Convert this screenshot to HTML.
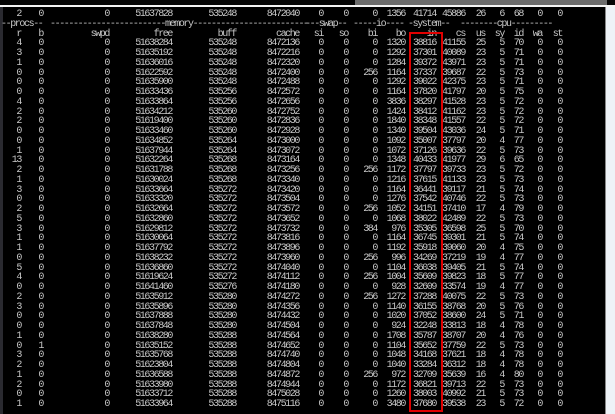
<!DOCTYPE html>
<html><head><meta charset="utf-8"><style>
*{margin:0;padding:0;box-sizing:border-box}
html,body{width:615px;height:414px;overflow:hidden;background:#eef2f7}
#top{position:absolute;left:0;top:0;width:615px;height:5px;background:#050505}
#topg{position:absolute;left:355px;top:0;width:252px;height:5px;background:#6c6c6c}
#wl{position:absolute;left:0;top:5px;width:615px;height:2px;background:#f4f4f4}
#term{position:absolute;left:0;top:7px;width:606px;height:407px;background:#000;border-left:3px solid #2a2a30;border-right:1px solid #888}
#lines{position:absolute;left:0;top:10px;font-family:"Liberation Mono",monospace;font-size:10px;letter-spacing:-1.4px;color:#c8c8c8;line-height:9.75px}
.r{display:grid;grid-template-columns:21px 22px 66px 63px 64px 63px 24px 25px 29px 28px 31px 29px 20px 19px 19px 19px 20px;height:9.75px;white-space:pre}
.r span{text-align:right;padding-right:0}
.h{position:relative;height:9.75px;white-space:pre}
.h span{position:absolute;top:0}
#box{position:absolute;left:409px;top:32px;width:34px;height:380px;border:2px solid #e00000}
</style></head><body>
<div id="top"></div><div id="topg"></div><div id="wl"></div>
<div id="term"></div>
<div id="lines">
<div class="r"><span>2</span><span>0</span><span>0</span><span>51637828</span><span>535248</span><span>8472040</span><span>0</span><span>0</span><span>0</span><span>1356</span><span>41714</span><span>45886</span><span>26</span><span>6</span><span>68</span><span>0</span><span>0</span></div>
<div class="h"><span style="left:1px">--procs--</span><span style="left:50px">-------------------------memory-------------------------</span><span style="left:305px">---swap--</span><span style="left:353px">-----io----</span><span style="left:408px">-system--</span><span style="left:460px">--------cpu---------</span></div>
<div class="r"><span>r</span><span>b</span><span>swpd</span><span>free</span><span>buff</span><span>cache</span><span>si</span><span>so</span><span>bi</span><span>bo</span><span>in</span><span>cs</span><span>us</span><span>sy</span><span>id</span><span>wa</span><span>st</span></div>
<div class="r"><span>4</span><span>0</span><span>0</span><span>51638284</span><span>535248</span><span>8472136</span><span>0</span><span>0</span><span>0</span><span>1320</span><span>38816</span><span>41155</span><span>25</span><span>5</span><span>70</span><span>0</span><span>0</span></div>
<div class="r"><span>3</span><span>0</span><span>0</span><span>51635192</span><span>535248</span><span>8472216</span><span>0</span><span>0</span><span>0</span><span>1292</span><span>37301</span><span>40089</span><span>23</span><span>5</span><span>71</span><span>0</span><span>0</span></div>
<div class="r"><span>1</span><span>0</span><span>0</span><span>51636016</span><span>535248</span><span>8472320</span><span>0</span><span>0</span><span>0</span><span>1284</span><span>39372</span><span>43971</span><span>23</span><span>5</span><span>71</span><span>0</span><span>0</span></div>
<div class="r"><span>0</span><span>0</span><span>0</span><span>51622592</span><span>535248</span><span>8472400</span><span>0</span><span>0</span><span>256</span><span>1164</span><span>37337</span><span>39687</span><span>22</span><span>5</span><span>73</span><span>0</span><span>0</span></div>
<div class="r"><span>0</span><span>0</span><span>0</span><span>51635900</span><span>535248</span><span>8472488</span><span>0</span><span>0</span><span>0</span><span>1292</span><span>39022</span><span>42375</span><span>23</span><span>5</span><span>71</span><span>0</span><span>0</span></div>
<div class="r"><span>0</span><span>0</span><span>0</span><span>51633436</span><span>535256</span><span>8472572</span><span>0</span><span>0</span><span>0</span><span>1164</span><span>37820</span><span>41797</span><span>20</span><span>5</span><span>75</span><span>0</span><span>0</span></div>
<div class="r"><span>4</span><span>0</span><span>0</span><span>51633864</span><span>535256</span><span>8472656</span><span>0</span><span>0</span><span>0</span><span>3836</span><span>38297</span><span>41528</span><span>23</span><span>5</span><span>72</span><span>0</span><span>0</span></div>
<div class="r"><span>2</span><span>0</span><span>0</span><span>51634212</span><span>535260</span><span>8472752</span><span>0</span><span>0</span><span>0</span><span>1424</span><span>38412</span><span>41162</span><span>23</span><span>5</span><span>72</span><span>0</span><span>0</span></div>
<div class="r"><span>2</span><span>0</span><span>0</span><span>51619400</span><span>535260</span><span>8472836</span><span>0</span><span>0</span><span>0</span><span>1840</span><span>38348</span><span>41557</span><span>22</span><span>5</span><span>72</span><span>0</span><span>0</span></div>
<div class="r"><span>0</span><span>0</span><span>0</span><span>51633460</span><span>535260</span><span>8472928</span><span>0</span><span>0</span><span>0</span><span>1340</span><span>39504</span><span>43036</span><span>24</span><span>5</span><span>71</span><span>0</span><span>0</span></div>
<div class="r"><span>0</span><span>0</span><span>0</span><span>51634852</span><span>535264</span><span>8473000</span><span>0</span><span>0</span><span>0</span><span>1092</span><span>35007</span><span>37797</span><span>20</span><span>4</span><span>77</span><span>0</span><span>0</span></div>
<div class="r"><span>1</span><span>0</span><span>0</span><span>51637944</span><span>535264</span><span>8473072</span><span>0</span><span>0</span><span>0</span><span>1072</span><span>37126</span><span>39636</span><span>22</span><span>5</span><span>73</span><span>0</span><span>0</span></div>
<div class="r"><span>13</span><span>0</span><span>0</span><span>51632264</span><span>535268</span><span>8473164</span><span>0</span><span>0</span><span>0</span><span>1348</span><span>40433</span><span>41977</span><span>29</span><span>6</span><span>65</span><span>0</span><span>0</span></div>
<div class="r"><span>2</span><span>0</span><span>0</span><span>51631788</span><span>535268</span><span>8473256</span><span>0</span><span>0</span><span>256</span><span>1172</span><span>37797</span><span>39733</span><span>23</span><span>5</span><span>72</span><span>0</span><span>0</span></div>
<div class="r"><span>1</span><span>0</span><span>0</span><span>51630024</span><span>535268</span><span>8473340</span><span>0</span><span>0</span><span>0</span><span>1216</span><span>37615</span><span>41133</span><span>23</span><span>5</span><span>73</span><span>0</span><span>0</span></div>
<div class="r"><span>3</span><span>0</span><span>0</span><span>51633664</span><span>535272</span><span>8473420</span><span>0</span><span>0</span><span>0</span><span>1164</span><span>36441</span><span>39117</span><span>21</span><span>5</span><span>74</span><span>0</span><span>0</span></div>
<div class="r"><span>0</span><span>0</span><span>0</span><span>51633320</span><span>535272</span><span>8473504</span><span>0</span><span>0</span><span>0</span><span>1276</span><span>37542</span><span>40746</span><span>22</span><span>5</span><span>73</span><span>0</span><span>0</span></div>
<div class="r"><span>2</span><span>0</span><span>0</span><span>51632664</span><span>535272</span><span>8473572</span><span>0</span><span>0</span><span>256</span><span>1052</span><span>34151</span><span>37410</span><span>17</span><span>4</span><span>79</span><span>0</span><span>0</span></div>
<div class="r"><span>5</span><span>0</span><span>0</span><span>51632860</span><span>535272</span><span>8473652</span><span>0</span><span>0</span><span>0</span><span>1068</span><span>38022</span><span>42489</span><span>22</span><span>5</span><span>73</span><span>0</span><span>0</span></div>
<div class="r"><span>3</span><span>0</span><span>0</span><span>51629812</span><span>535272</span><span>8473732</span><span>0</span><span>0</span><span>384</span><span>976</span><span>35305</span><span>36598</span><span>25</span><span>5</span><span>70</span><span>0</span><span>0</span></div>
<div class="r"><span>1</span><span>0</span><span>0</span><span>51630064</span><span>535272</span><span>8473816</span><span>0</span><span>0</span><span>0</span><span>1164</span><span>36745</span><span>39301</span><span>21</span><span>5</span><span>74</span><span>0</span><span>0</span></div>
<div class="r"><span>1</span><span>0</span><span>0</span><span>51637792</span><span>535272</span><span>8473896</span><span>0</span><span>0</span><span>0</span><span>1192</span><span>35918</span><span>39060</span><span>20</span><span>4</span><span>75</span><span>0</span><span>0</span></div>
<div class="r"><span>0</span><span>0</span><span>0</span><span>51638232</span><span>535272</span><span>8473960</span><span>0</span><span>0</span><span>256</span><span>996</span><span>34269</span><span>37219</span><span>19</span><span>4</span><span>77</span><span>0</span><span>0</span></div>
<div class="r"><span>5</span><span>0</span><span>0</span><span>51636860</span><span>535272</span><span>8474040</span><span>0</span><span>0</span><span>0</span><span>1104</span><span>36038</span><span>39405</span><span>21</span><span>5</span><span>74</span><span>0</span><span>0</span></div>
<div class="r"><span>4</span><span>0</span><span>0</span><span>51619624</span><span>535272</span><span>8474112</span><span>0</span><span>0</span><span>256</span><span>1004</span><span>35609</span><span>39823</span><span>18</span><span>5</span><span>77</span><span>0</span><span>0</span></div>
<div class="r"><span>0</span><span>0</span><span>0</span><span>51641460</span><span>535276</span><span>8474180</span><span>0</span><span>0</span><span>0</span><span>928</span><span>32609</span><span>33574</span><span>19</span><span>4</span><span>77</span><span>0</span><span>0</span></div>
<div class="r"><span>2</span><span>0</span><span>0</span><span>51635912</span><span>535280</span><span>8474272</span><span>0</span><span>0</span><span>256</span><span>1272</span><span>37288</span><span>40075</span><span>22</span><span>5</span><span>73</span><span>0</span><span>0</span></div>
<div class="r"><span>3</span><span>0</span><span>0</span><span>51635896</span><span>535280</span><span>8474356</span><span>0</span><span>0</span><span>0</span><span>1140</span><span>36155</span><span>38768</span><span>20</span><span>5</span><span>76</span><span>0</span><span>0</span></div>
<div class="r"><span>0</span><span>0</span><span>0</span><span>51637888</span><span>535280</span><span>8474432</span><span>0</span><span>0</span><span>0</span><span>1020</span><span>37052</span><span>38600</span><span>24</span><span>5</span><span>71</span><span>0</span><span>0</span></div>
<div class="r"><span>0</span><span>0</span><span>0</span><span>51637848</span><span>535280</span><span>8474504</span><span>0</span><span>0</span><span>0</span><span>924</span><span>32248</span><span>33813</span><span>18</span><span>4</span><span>78</span><span>0</span><span>0</span></div>
<div class="r"><span>1</span><span>0</span><span>0</span><span>51638280</span><span>535288</span><span>8474564</span><span>0</span><span>0</span><span>0</span><span>1708</span><span>35787</span><span>38707</span><span>20</span><span>4</span><span>76</span><span>0</span><span>0</span></div>
<div class="r"><span>0</span><span>1</span><span>0</span><span>51635152</span><span>535288</span><span>8474652</span><span>0</span><span>0</span><span>0</span><span>1104</span><span>35652</span><span>37759</span><span>22</span><span>5</span><span>73</span><span>0</span><span>0</span></div>
<div class="r"><span>3</span><span>0</span><span>0</span><span>51635768</span><span>535288</span><span>8474740</span><span>0</span><span>0</span><span>0</span><span>1048</span><span>34168</span><span>37621</span><span>18</span><span>4</span><span>78</span><span>0</span><span>0</span></div>
<div class="r"><span>2</span><span>0</span><span>0</span><span>51623804</span><span>535288</span><span>8474804</span><span>0</span><span>0</span><span>0</span><span>1040</span><span>33284</span><span>36312</span><span>18</span><span>4</span><span>78</span><span>0</span><span>0</span></div>
<div class="r"><span>1</span><span>0</span><span>0</span><span>51636588</span><span>535288</span><span>8474872</span><span>0</span><span>0</span><span>256</span><span>972</span><span>32709</span><span>35639</span><span>16</span><span>4</span><span>80</span><span>0</span><span>0</span></div>
<div class="r"><span>2</span><span>0</span><span>0</span><span>51633980</span><span>535288</span><span>8474944</span><span>0</span><span>0</span><span>0</span><span>1172</span><span>36821</span><span>39713</span><span>22</span><span>5</span><span>73</span><span>0</span><span>0</span></div>
<div class="r"><span>0</span><span>0</span><span>0</span><span>51633712</span><span>535288</span><span>8475028</span><span>0</span><span>0</span><span>0</span><span>1260</span><span>38003</span><span>40992</span><span>21</span><span>5</span><span>73</span><span>0</span><span>0</span></div>
<div class="r"><span>1</span><span>0</span><span>0</span><span>51633964</span><span>535288</span><span>8475116</span><span>0</span><span>0</span><span>0</span><span>3480</span><span>37680</span><span>39538</span><span>23</span><span>5</span><span>72</span><span>0</span><span>0</span></div>
</div>
<div id="box"></div>
</body></html>
